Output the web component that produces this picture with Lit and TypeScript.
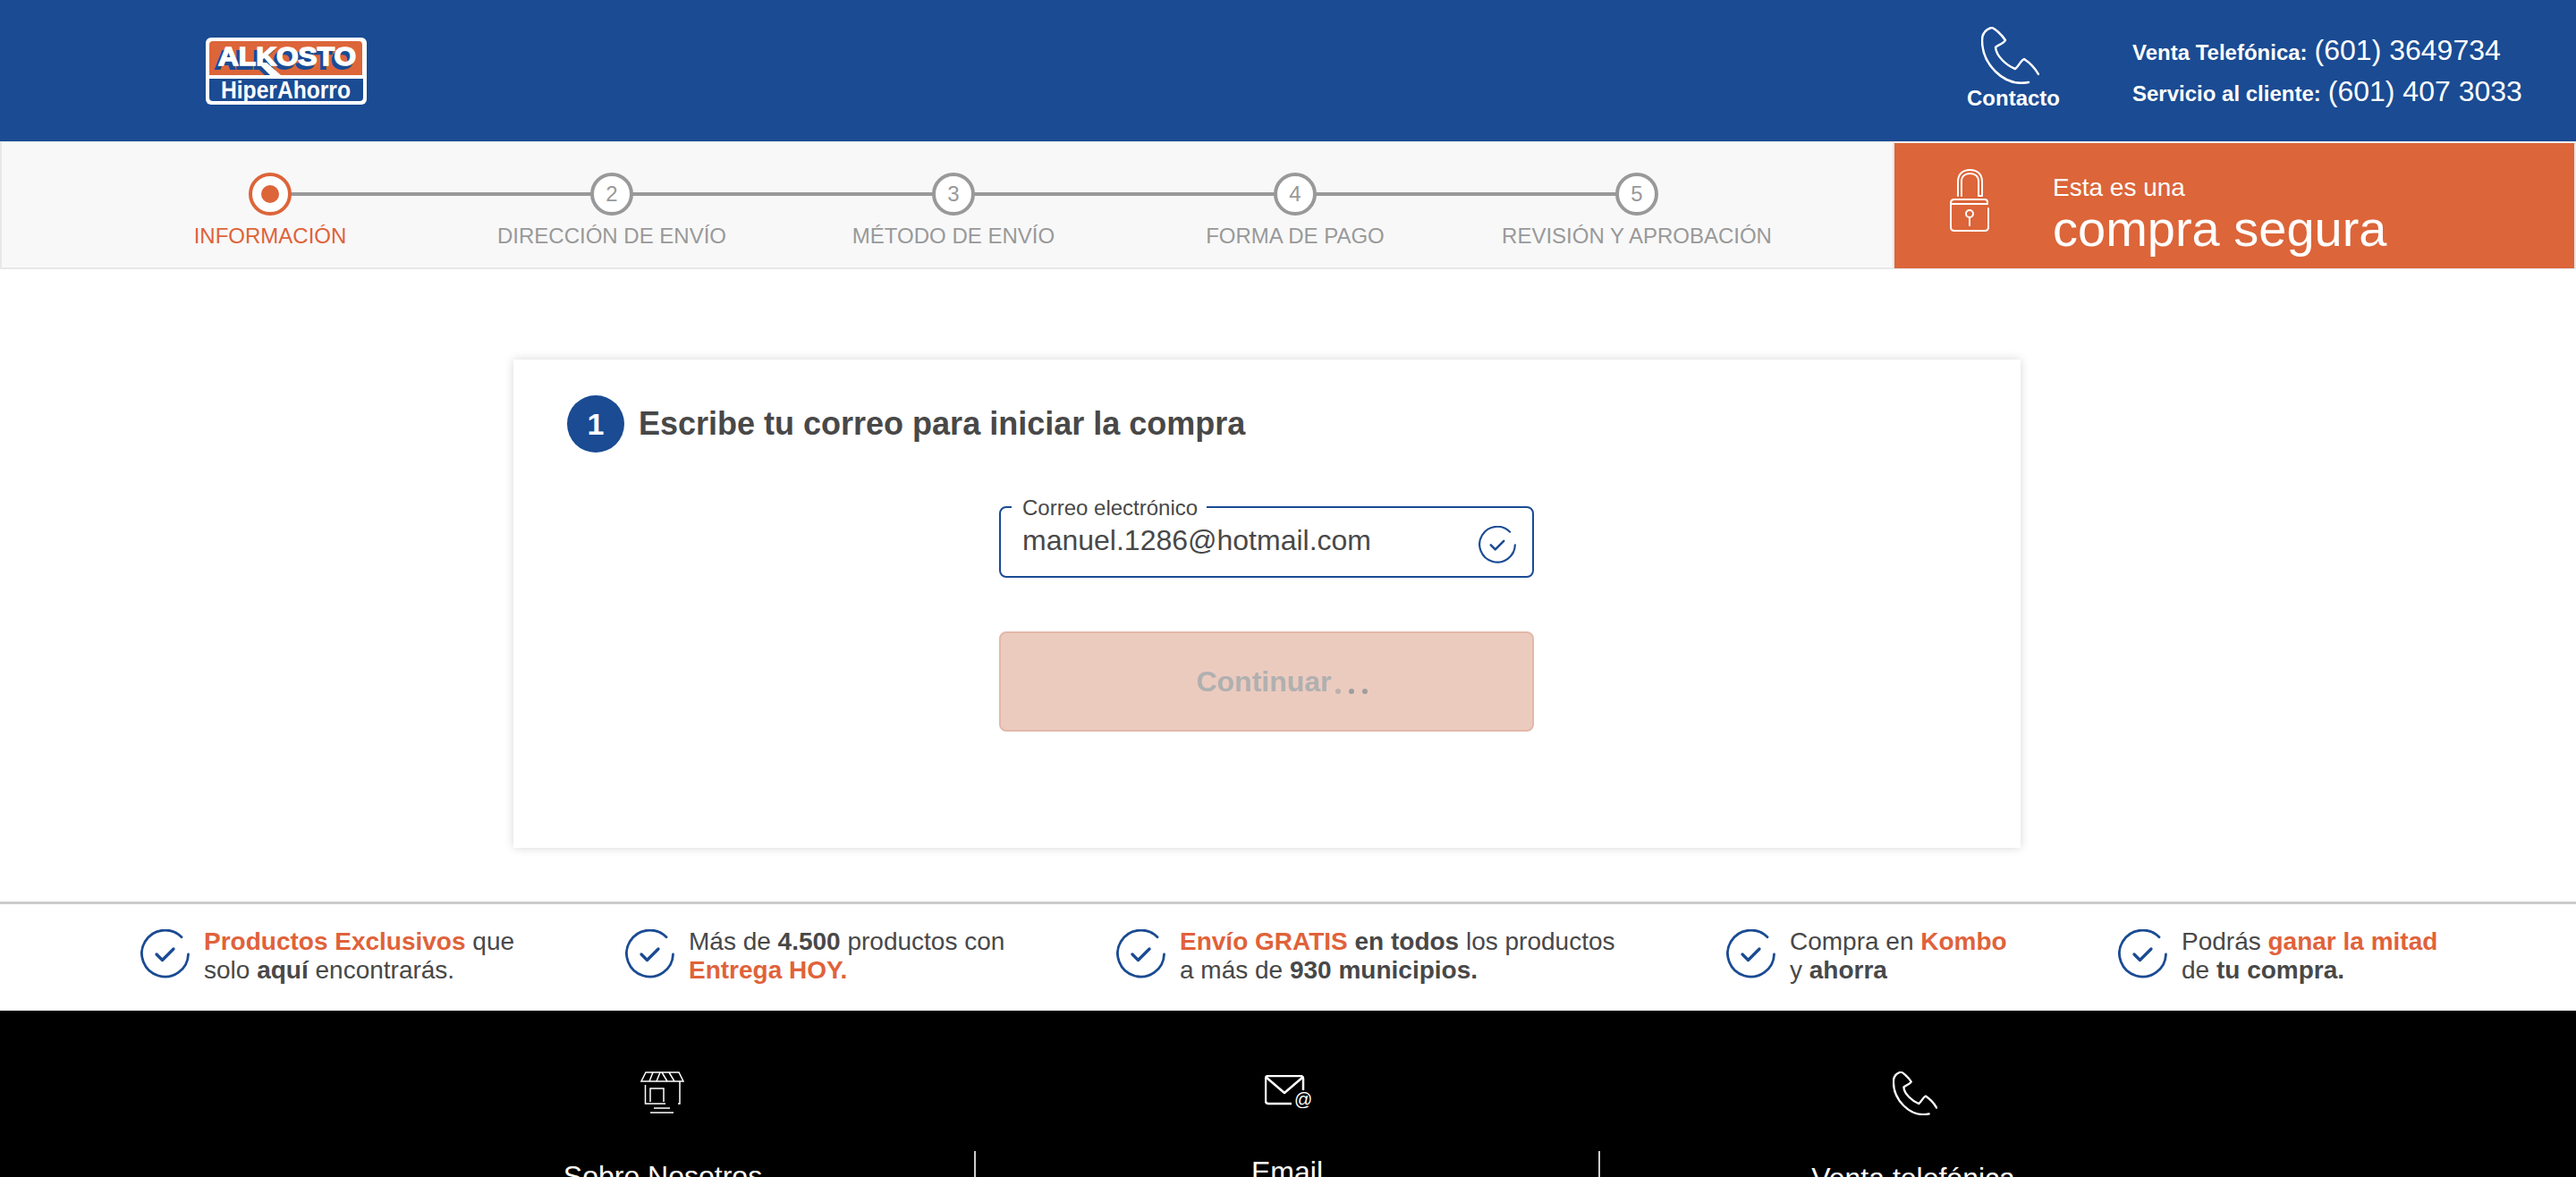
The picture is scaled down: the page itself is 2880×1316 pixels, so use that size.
import { LitElement, html, css, svg } from 'lit';
import { customElement } from 'lit/decorators.js';

const STEPS = ['INFORMACIÓN', 'DIRECCIÓN DE ENVÍO', 'MÉTODO DE ENVÍO', 'FORMA DE PAGO', 'REVISIÓN Y APROBACIÓN'];

const phoneIcon = (w: number, h: number, sw: number) => html`
  <svg width=${w} height=${h} viewBox="0 0 65 64" fill="none" stroke="#fff" stroke-width=${sw} stroke-linecap="round" stroke-linejoin="round">
    <path d="M11 1C5 3 1 8 1 15C1 30 8 42 16 50C26 60 38 65 53 62" />
    <path d="M11 1C14 0 24 10 27 15C25 19 19 20 16 23C17 33 28 43 38 47C42 44 44 38 48 36C54 40 60 46 64 53" />
  </svg>`;

const checkIcon = (size: number) => html`
  <svg width=${size} height=${size} viewBox="0 0 55 55" fill="none" stroke="#1a4b93" stroke-width="2.800" stroke-linecap="round" stroke-linejoin="round">
    <path d="M46 8.800A26 26 0 1 0 53.500 28" />
    <path d="M18 28L24.500 34.500L37 22" stroke-width="3.300" />
  </svg>`;

@customElement('app-root')
export class AppRoot extends LitElement {
  static styles = css`
    :host {
      display: block;
      width: 2880px;
      height: 1316px;
      overflow: hidden;
      background: #fff;
      font-family: 'Liberation Sans', Arial, sans-serif;
      color: #484848;
    }
    .top {
      height: 158px;
      background: #1a4b93;
      display: flex;
      align-items: flex-start;
      color: #fff;
      padding-left: 230px;
      box-sizing: border-box;
    }
    .logo { display: block; margin-top: 42px; }
    .contact {
      margin-left: auto;
      width: 104px;
      margin-right: 81px;
      padding-top: 30px;
      display: flex;
      flex-direction: column;
      align-items: center;
      font-size: 24px;
      font-weight: 700;
      line-height: 28px;
    }
    .contact svg { margin-right: 7px; }
    .contact span { margin-top: 2px; }
    .tel { width: 496px; padding-top: 33px; box-sizing: border-box; font-size: 24px; font-weight: 700; }
    .tel div { height: 46px; line-height: 46px; white-space: nowrap; }
    .tel b { font-size: 32px; font-weight: 400; margin-left: 8px; }

    .bar { height: 143px; display: flex; box-sizing: border-box; }
    .steps {
      flex: 1;
      background: #f8f8f8;
      border: 2px solid #e8e8e8;
      border-top-width: 1px;
      box-sizing: border-box;
      padding: 34px 0 0 109px;
      display: grid;
      grid-template-columns: repeat(5, 382px);
    }
    .step {
      position: relative;
      display: flex;
      flex-direction: column;
      align-items: center;
      font-size: 24px;
      line-height: 28px;
      color: #999;
      white-space: nowrap;
    }
    .step:not(:last-child)::after {
      content: '';
      position: absolute;
      left: 50%;
      width: 100%;
      top: 22px;
      height: 4px;
      background: #999;
    }
    .dot {
      position: relative;
      z-index: 1;
      width: 48px;
      height: 48px;
      box-sizing: border-box;
      border: 4px solid #999;
      border-radius: 50%;
      background: #fff;
      display: flex;
      align-items: center;
      justify-content: center;
      margin-bottom: 9px;
    }
    .step.on { color: #e0623a; }
    .dot i { width: 20px; height: 20px; border-radius: 50%; background: #dc6539; }
    .step.on .dot { border-color: #dc6539; }
    .safe {
      width: 762px;
      box-sizing: border-box;
      background: #dc6539;
      border-right: 2px solid #e8e8e8;
      border-top: 2px solid #f0f0f0;
      border-bottom: 1px solid #e8e8e8;
      color: #fff;
      display: flex;
      align-items: flex-start;
      padding: 29px 0 0 62px;
    }
    .safe .txt { margin-left: 71px; }
    .safe .a { font-size: 28px; line-height: 36px; margin-top: 3px; }
    .safe .b { font-size: 56px; line-height: 60px; margin-top: -2px; }

    .card {
      margin: 101px 0 0 574px;
      width: 1685px;
      height: 546px;
      box-sizing: border-box;
      background: #fff;
      box-shadow: 0 0 10px rgba(0, 0, 0, 0.16);
      padding: 40px 0 0 60px;
    }
    .head { display: flex; align-items: center; gap: 16px; font-size: 36px; font-weight: 700; }
    .num {
      width: 64px;
      height: 64px;
      border-radius: 50%;
      background: #1a4b93;
      color: #fff;
      display: flex;
      align-items: center;
      justify-content: center;
      font-size: 34px;
    }
    .form { width: 598px; margin: 60px 0 0 483px; }
    .field {
      position: relative;
      height: 80px;
      box-sizing: border-box;
      border: 2px solid #1a4b93;
      border-radius: 8px;
      display: flex;
      align-items: center;
      padding: 0 18px 0 24px;
    }
    .field label {
      position: absolute;
      left: 12px;
      top: -15px;
      padding: 0 10px 0 12px;
      background: #fff;
      font-size: 24px;
      line-height: 30px;
    }
    .field input {
      flex: 1;
      min-width: 0;
      border: 0;
      outline: 0;
      padding: 0;
      margin-top: -4px;
      font: 32px 'Liberation Sans', Arial, sans-serif;
      color: #484848;
      background: transparent;
    }
    .field svg { margin-top: 6px; }
    .go {
      position: relative;
      margin-top: 60px;
      height: 112px;
      width: 100%;
      box-sizing: border-box;
      background: #eccbbf;
      border: 2px solid #e3b8a9;
      border-radius: 8px;
      color: #b0b0b0;
      font: 700 32px 'Liberation Sans', Arial, sans-serif;
      display: flex;
      align-items: center;
      justify-content: center;
      padding: 0 6px 0 0;
    }
    .dots { position: absolute; left: 374px; top: 62px; display: flex; gap: 9px; }
    .dots i { width: 6px; height: 6px; border-radius: 50%; background: #9e9e9e; }
    .dots i:first-child { opacity: 0.6; }

    .perks {
      margin-top: 60px;
      height: 122px;
      box-sizing: border-box;
      border-top: 3px solid #ccc;
      padding: 28px 0 0 157px;
      display: grid;
      grid-template-columns: 542px 549px 682px 438px auto;
      font-size: 28px;
      line-height: 32px;
    }
    .perk { display: flex; gap: 16px; white-space: nowrap; }
    .perk svg { flex: none; }
    .perk .txt { margin-top: -2px; }
    .perk em { font-style: normal; font-weight: 700; color: #e0623a; }

    .foot {
      background: #000;
      color: #fff;
      height: 186px;
      display: flex;
      justify-content: center;
      font-size: 32px;
      line-height: 38px;
    }
    .col { width: 698px; display: flex; flex-direction: column; align-items: center; }
    .ico { flex: none; height: 157px; box-sizing: border-box; display: flex; justify-content: center; }
    .lbl {
      flex: none;
      align-self: stretch;
      text-align: center;
      height: 60px;
      box-sizing: border-box;
    }
    .col:not(:last-child) .lbl { border-right: 2px solid #ccc; }
    .s1 .ico { padding: 68px 3px 0 0; }
    .s2 .ico { padding-top: 72px; }
    .s3 .ico { padding: 68px 0 0 5px; }
    .s1 .lbl { padding-top: 9px; }
    .s2 .lbl { padding-top: 4px; }
    .s3 .lbl { padding: 11px 0 0 2px; }
  `;

  private logo() {
    return html`
      <svg class="logo" width="180" height="75" viewBox="0 0 180 75">
        <rect x="0" y="0" width="180" height="75" rx="6" fill="#fff" />
        <path d="M4 8a4 4 0 0 1 4-4H171a4 4 0 0 1 4 4V42H4Z" fill="#dc6539" />
        <path d="M4 46H176V67a4 4 0 0 1-4 4H8a4 4 0 0 1-4-4Z" fill="#1a4b93" />
        ${svg`
          <path d="M53 30L64 30L78 42L66 42Z" fill="#1a4b93" />
          <text x="10" y="35" font-family="Liberation Sans" font-weight="700" font-size="29" fill="#1a4b93" stroke="#1a4b93" stroke-width="1.800" textLength="155" lengthAdjust="spacingAndGlyphs">ALKOSTO</text>
          <text x="14" y="31" font-family="Liberation Sans" font-weight="700" font-size="29" fill="#fff" stroke="#fff" stroke-width="1.500" textLength="154" lengthAdjust="spacingAndGlyphs">ALKOSTO</text>
          <path d="M58 28L68 28L84 42L72 42Z" fill="#fff" />
          <text x="17" y="68" font-family="Liberation Sans" font-weight="700" font-size="27" fill="#fff" textLength="145" lengthAdjust="spacingAndGlyphs">HiperAhorro</text>
        `}
      </svg>`;
  }

  private lock() {
    return html`
      <svg width="44" height="70" viewBox="0 0 44 70" fill="none" stroke="#fff" stroke-width="2" stroke-linecap="round" stroke-linejoin="round">
        <path d="M9 30V14C9 6 14 1 22.500 1C31 1 36 6 36 14V30H32V14C32 8 28 5 22.500 5C17 5 13 8 13 14V30" />
        <path d="M42 38V37C42 35 41 34 39 34H5C2 34 1 36 1 38V65C1 68 2 69 5 69H39C42 69 43 68 43 65V44" />
        <path d="M1 39H42" />
        <circle cx="22" cy="50" r="4" />
        <path d="M22 54V63" />
      </svg>`;
  }

  render() {
    return html`
      <div class="top">
        ${this.logo()}
        <div class="contact">${phoneIcon(65, 64, 2.500)}<span>Contacto</span></div>
        <div class="tel">
          <div>Venta Telefónica:<b>(601) 3649734</b></div>
          <div>Servicio al cliente:<b>(601) 407 3033</b></div>
        </div>
      </div>

      <div class="bar">
        <div class="steps">
          ${STEPS.map((s, i) => html`
            <div class="step ${i === 0 ? 'on' : ''}">
              <div class="dot">${i === 0 ? html`<i></i>` : i + 1}</div>
              ${s}
            </div>
          `)}
        </div>
        <div class="safe">
          ${this.lock()}
          <div class="txt">
            <div class="a">Esta es una</div>
            <div class="b">compra segura</div>
          </div>
        </div>
      </div>

      <div class="card">
        <div class="head"><div class="num">1</div>Escribe tu correo para iniciar la compra</div>
        <div class="form">
          <div class="field">
            <label>Correo electrónico</label>
            <input type="text" .value=${'manuel.1286@hotmail.com'} />
            ${checkIcon(42)}
          </div>
          <div class="go">Continuar<span class="dots"><i></i><i></i><i></i></span></div>
        </div>
      </div>

      <div class="perks">
        <div class="perk">${checkIcon(55)}<div class="txt"><em>Productos Exclusivos</em> que<br />solo <b>aquí</b> encontrarás.</div></div>
        <div class="perk">${checkIcon(55)}<div class="txt">Más de <b>4.500</b> productos con<br /><em>Entrega HOY.</em></div></div>
        <div class="perk">${checkIcon(55)}<div class="txt"><em>Envío GRATIS</em> <b>en todos</b> los productos<br />a más de <b>930 municipios.</b></div></div>
        <div class="perk">${checkIcon(55)}<div class="txt">Compra en <em>Kombo</em><br />y <b>ahorra</b></div></div>
        <div class="perk">${checkIcon(55)}<div class="txt">Podrás <em>ganar la mitad</em><br />de <b>tu compra.</b></div></div>
      </div>

      <div class="foot">
        <div class="col s1">
          <div class="ico">
            <svg width="49" height="47" viewBox="0 0 49 47" fill="none" stroke="#fff" stroke-width="1.500">
              <path d="M6 1H43L48 11H1Z" />
              <path d="M14 1L10 11M22 1L18 11M24 1L30 11M32 1L38 11" />
              <path d="M5.500 15V36H28M44 11V36H42" />
              <path d="M11 34V19H26V34" />
              <path d="M15 41H33M11 46H37" />
            </svg>
          </div>
          <div class="lbl">Sobre Nosotros</div>
        </div>
        <div class="col s2">
          <div class="ico">
            <svg width="52" height="37" viewBox="0 0 52 37" fill="none" stroke="#fff" stroke-width="2.500" stroke-linejoin="round">
              <path d="M30 32H4C2 32 1 31 1 29V4C1 2 2 1 4 1H40C42 1 43 2 43 4V17" />
              <path d="M1 2L22 20L43 2" />
              ${svg`<text x="33" y="34" font-family="Liberation Sans" font-size="20" fill="#fff" stroke="none">@</text>`}
            </svg>
          </div>
          <div class="lbl">Email</div>
        </div>
        <div class="col s3">
          <div class="ico">${phoneIcon(50, 49, 3)}</div>
          <div class="lbl">Venta telefónica</div>
        </div>
      </div>
    `;
  }
}
